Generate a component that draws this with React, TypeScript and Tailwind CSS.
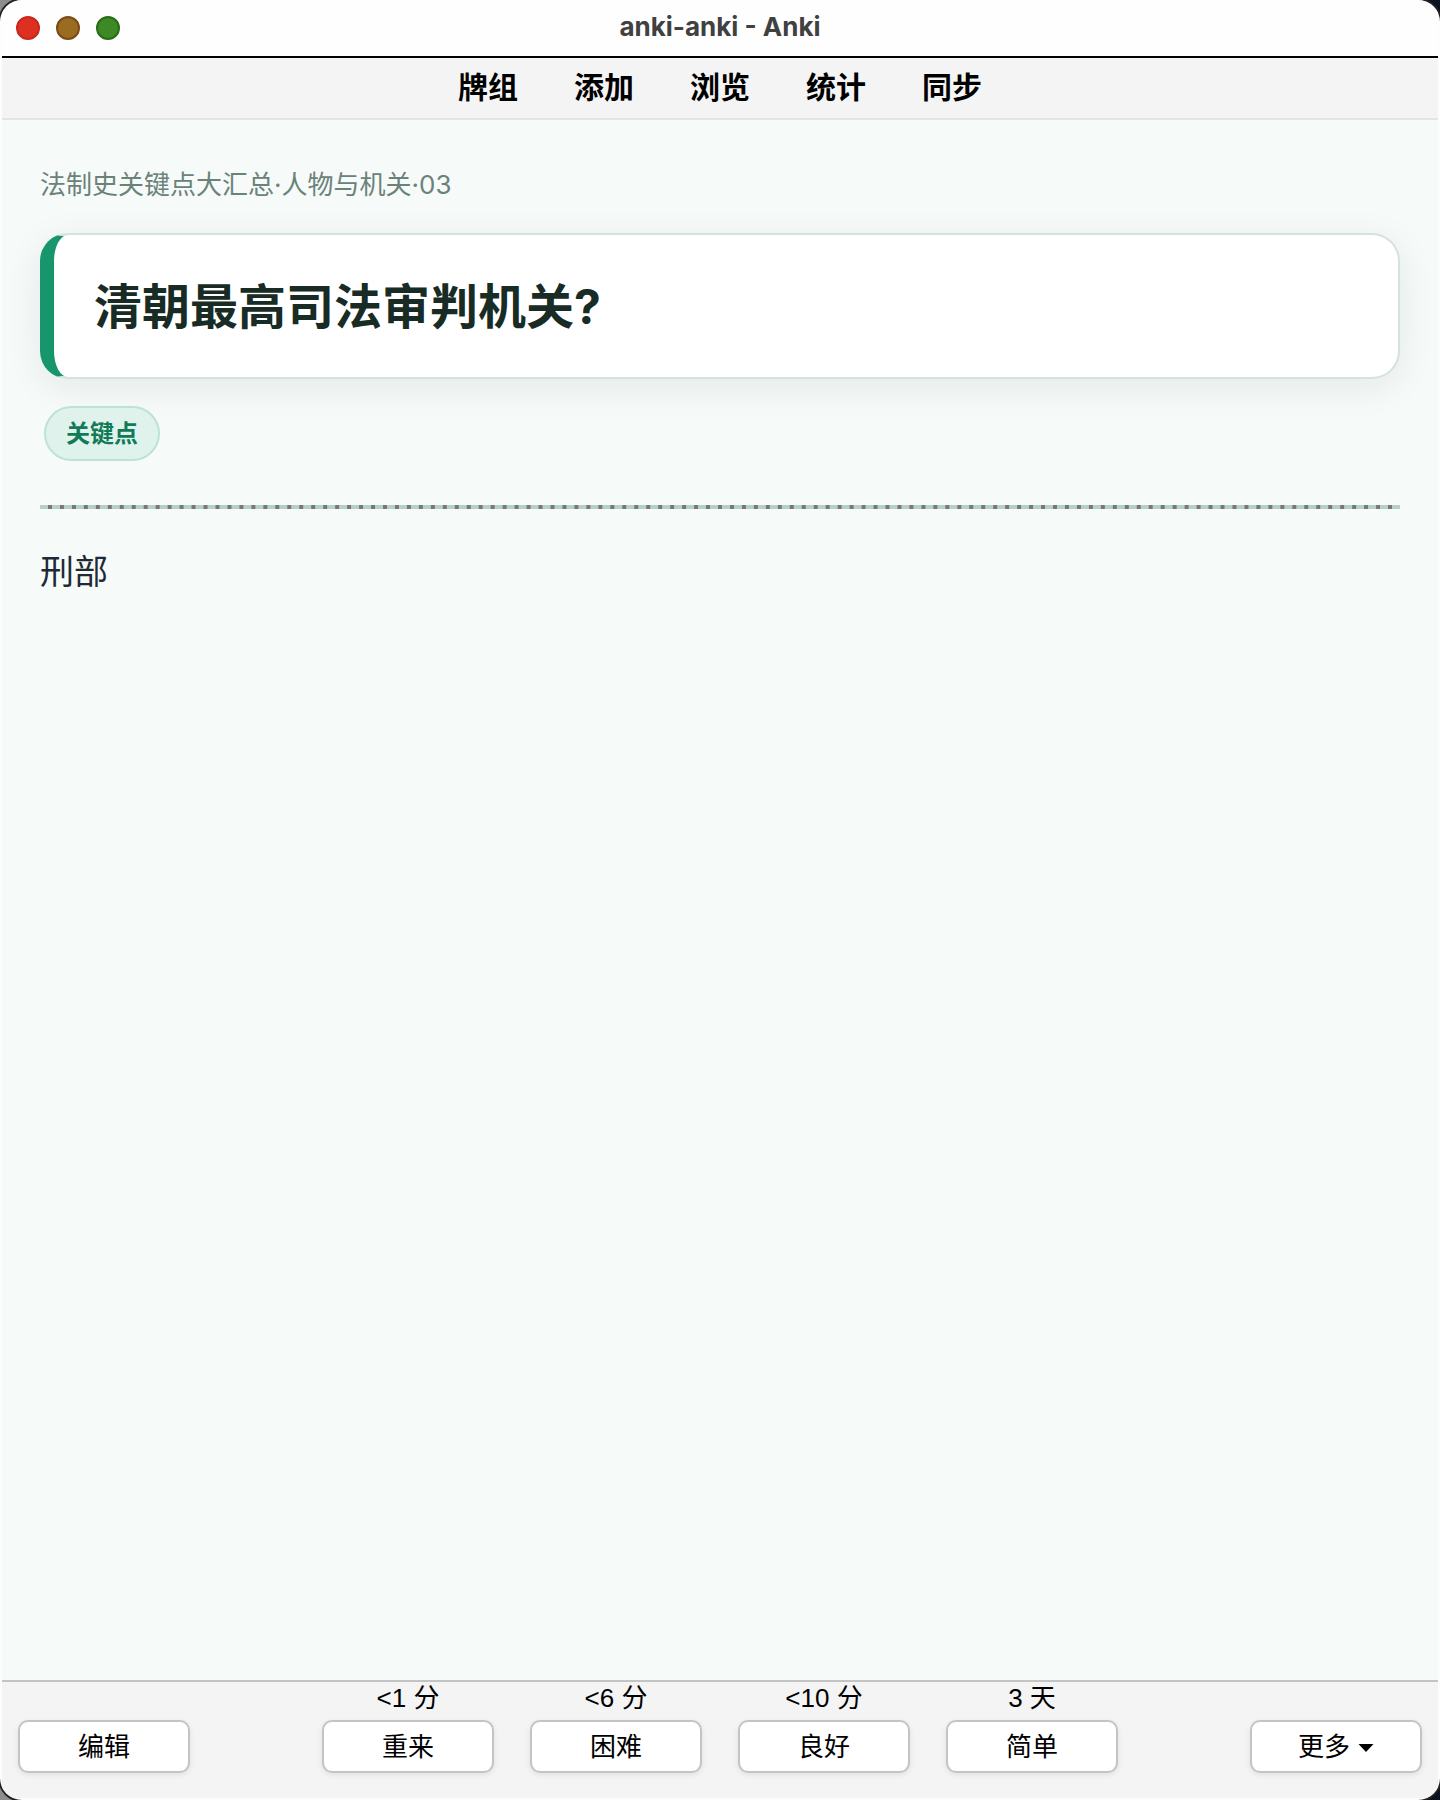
const menuItems = ["牌组", "添加", "浏览", "统计", "同步"];

const answers = [
  { due: "<1 分", label: "重来" },
  { due: "<6 分", label: "困难" },
  { due: "<10 分", label: "良好" },
  { due: "3 天", label: "简单" },
];

const barButton =
  "flex h-[53px] w-[172px] items-center justify-center rounded-[10px] border-2 border-[#c4c4c4] bg-white text-[26px] leading-none text-black shadow-[0_2px_6px_rgba(0,0,0,0.08)]";

function TitleBar() {
  return (
    <header className="grid h-[58px] grid-cols-[1fr_auto_1fr] items-center border-b-2 border-black bg-[#fefefe] px-3.5">
      <div className="flex gap-4">
        <button type="button" aria-label="关闭" className="size-6 rounded-full border-2 border-[#c6291d] bg-[#dd2f22]" />
        <button type="button" aria-label="最小化" className="size-6 rounded-full border-2 border-[#7c4a17] bg-[#996c20]" />
        <button type="button" aria-label="缩放" className="size-6 rounded-full border-2 border-[#2a6a18] bg-[#3c8926]" />
      </div>
      <h1 className="pb-0.5 font-['Inter',sans-serif] text-[26px] leading-8 font-bold text-[#404040]">anki-anki - Anki</h1>
      <div />
    </header>
  );
}

function MenuBar() {
  return (
    <nav className="flex h-[62px] items-center justify-center gap-14 border-b-2 border-[#e3e3e3] bg-[#f4f4f4] pb-0.5">
      {menuItems.map((item) => (
        <a key={item} href="#" className="text-[30px] leading-10 font-bold text-black">
          {item}
        </a>
      ))}
    </nav>
  );
}

function Card() {
  return (
    <main className="flex-1 bg-[#f6faf9] px-[38px] pt-[45px]">
      <p className="text-[26px] leading-10 text-[#6b8279]">法制史关键点大汇总·人物与机关·03</p>
      <section className="mt-7 rounded-[28px] border-2 border-l-[14px] border-[#d3e3dd] border-l-[#17966d] bg-white px-10 pt-[38px] pb-9 shadow-[0_8px_36px_rgba(20,30,25,0.08)]">
        <h2 className="text-[48px] leading-[68px] font-bold text-[#182b25]">清朝最高司法审判机关?</h2>
      </section>
      <div className="mt-[27px] ml-1 flex">
        <span className="rounded-full border-2 border-[#bce3d6] bg-[#dff3ec] px-5 pt-[10px] pb-[9px] text-[24px] leading-8 font-bold text-[#117a58]">
          关键点
        </span>
      </div>
      <hr className="mt-11 border-t-4 border-dashed border-[#b5d1c5] bg-[#777777]" />
      <p className="mt-9 text-[34px] leading-[54px] text-[#1f2937]">刑部</p>
    </main>
  );
}

function AnswerBar() {
  return (
    <footer className="flex h-[118px] items-end justify-between border-t-2 border-[#c4c4c4] bg-[#f4f4f4] px-4 pb-[25px] font-['Liberation_Sans','Noto_Sans_CJK_SC',sans-serif]">
      <button type="button" className={barButton}>编辑</button>
      <div className="flex gap-9">
        {answers.map((a, i) => (
          <div key={a.label} className="flex flex-col items-center gap-1.5">
            <span id={`due-${i}`} className="text-[26px] leading-8 text-black">{a.due}</span>
            <button type="button" aria-describedby={`due-${i}`} className={barButton}>{a.label}</button>
          </div>
        ))}
      </div>
      <button type="button" className={barButton}>
        更多
        <svg aria-hidden="true" viewBox="0 0 16 8" className="mt-0.5 ml-2 h-2 w-4">
          <path d="M0.5 0H15.5L8 8Z" fill="currentColor" />
        </svg>
      </button>
    </footer>
  );
}

export default function App() {
  return (
    <div className="flex min-h-screen flex-col bg-[linear-gradient(to_right,#8d8d8d_50%,#0b1220_50%)]">
      <div
        lang="zh-CN"
        className="flex flex-1 flex-col overflow-hidden rounded-[22px] bg-[#fdfdfd] px-0.5 pb-0.5 font-['Inter','Noto_Sans_CJK_SC',sans-serif] shadow-[0_0_0_2px_#222222]"
      >
        <TitleBar />
        <MenuBar />
        <Card />
        <AnswerBar />
      </div>
    </div>
  );
}
